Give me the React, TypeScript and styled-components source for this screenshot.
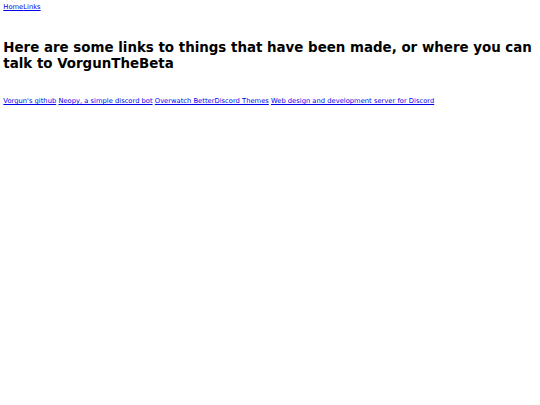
import styled, { createGlobalStyle } from "styled-components";

const GlobalStyle = createGlobalStyle`
  body {
    margin: 3.33px;
    font-family: "DejaVu Sans", Verdana, sans-serif;
    font-size: 6.75px;
    color: #000;
    background: #fff;
  }
`;

const Nav = styled.nav`
  display: flex;
`;

const Link = styled.a`
  color: #0000ee;
  text-decoration: underline;
`;

const Heading = styled.h1`
  font-size: 13.4px;
  font-weight: bold;
  line-height: 16px;
  margin: 29px 0 25px;
`;

const LinkRow = styled.div``;

const links = [
  "Vorgun's github",
  "Neopy, a simple discord bot",
  "Overwatch BetterDiscord Themes",
  "Web design and development server for Discord",
];

export default function App() {
  return (
    <>
      <GlobalStyle />
      <Nav>
        <Link href="#">Home</Link>
        <Link href="#">Links</Link>
      </Nav>
      <Heading>
        Here are some links to things that have been made, or where you can talk to VorgunTheBeta
      </Heading>
      <LinkRow>
        {links.map((l, i) => (
          <span key={l}>
            {i > 0 && " "}
            <Link href="#">{l}</Link>
          </span>
        ))}
      </LinkRow>
    </>
  );
}
